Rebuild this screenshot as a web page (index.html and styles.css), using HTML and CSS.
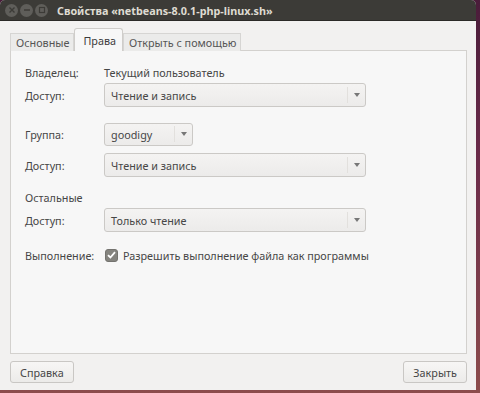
FILE: index.html
```html
<!DOCTYPE html>
<html>
<head>
    <meta charset="UTF-8" />
    <title>Свойства</title>
    <link rel="stylesheet" href="styles.css">
</head>
<body>
    <div class="win">
        <div class="titlebar">
            <span class="tb-btn"><svg width="8" height="8" viewBox="0 0 8 8"><path d="M1.5 1.5l5 5M6.5 1.5l-5 5" stroke="#3c3b37" stroke-width="1.4"/></svg></span>
            <span class="tb-btn"><svg width="8" height="8" viewBox="0 0 8 8"><path d="M1 4h6" stroke="#3c3b37" stroke-width="1.6"/></svg></span>
            <span class="tb-btn"><svg width="8" height="8" viewBox="0 0 8 8"><rect x="1.5" y="1.5" width="5" height="5" fill="none" stroke="#3c3b37" stroke-width="1.2"/></svg></span>
            <span class="title">Свойства «netbeans-8.0.1-php-linux.sh»</span>
        </div>
        <div class="body">
            <div class="tabs">
                <span class="tab">Основные</span>
                <span class="tab active">Права</span>
                <span class="tab">Открыть с помощью</span>
            </div>
            <div class="panel">
                <div class="row r-owner">
                    <span class="lbl">Владелец:</span>
                    <span class="val">Текущий пользователь</span>
                </div>
                <div class="row">
                    <span class="lbl">Доступ:</span>
                    <div class="combo"><span class="ctext">Чтение и запись</span><span class="carrow"></span></div>
                </div>
                <div class="row r-group">
                    <span class="lbl">Группа:</span>
                    <div class="combo small"><span class="ctext">goodigy</span><span class="carrow"></span></div>
                </div>
                <div class="row r-gaccess">
                    <span class="lbl">Доступ:</span>
                    <div class="combo"><span class="ctext">Чтение и запись</span><span class="carrow"></span></div>
                </div>
                <div class="row r-other">
                    <span class="lbl">Остальные</span>
                </div>
                <div class="row">
                    <span class="lbl">Доступ:</span>
                    <div class="combo"><span class="ctext">Только чтение</span><span class="carrow"></span></div>
                </div>
                <div class="row r-exec">
                    <span class="lbl">Выполнение:</span>
                    <span class="check"><svg width="9" height="8" viewBox="0 0 9 8"><path d="M1 4.2l2.4 2.3L8 1.2" fill="none" stroke="#fff" stroke-width="1.8"/></svg></span>
                    <span class="val">Разрешить выполнение файла как программы</span>
                </div>
            </div>
            <div class="actions">
                <span class="btn">Справка</span>
                <span class="btn">Закрыть</span>
            </div>
        </div>
    </div>
</body>
</html>
```

FILE: styles.css
```css
*{
    margin: 0;
    padding: 0;
    box-sizing: border-box;
}
body{
    width: 480px;
    height: 393px;
    overflow: hidden;
    background: linear-gradient(#4a1c3a, #6a2a48 40%, #8c4c4c);
    font-family: "Noto Sans", "DejaVu Sans", sans-serif;
    font-size: 10.8px;
    color: #464646;
}
.win{
    width: 476px;
    height: 390px;
    background: #f2f1f0;
    border-radius: 5px 5px 0 0;
    overflow: hidden;
    display: flex;
    flex-direction: column;
}
.titlebar{
    height: 21px;
    background: #3c3b37;
    border-bottom: 1px solid #2b2a27;
    display: flex;
    align-items: center;
    padding-left: 5px;
    gap: 2px;
}
.tb-btn{
    width: 13px;
    height: 13px;
    border-radius: 50%;
    background: #5f5e5a;
    display: flex;
    align-items: center;
    justify-content: center;
}
.title{
    margin-left: 7px;
    color: #dfdbd2;
    font-weight: bold;
    font-size: 10.8px;
}
.body{
    flex: 1;
    display: flex;
    flex-direction: column;
    padding: 8px 9px 7px 10px;
}
.tabs{
    display: flex;
    align-items: flex-end;
    height: 22px;
    margin-bottom: -1px;
    position: relative;
    z-index: 1;
}
.tab{
    height: 18px;
    padding: 0 4px 0 5px;
    background: #ebebea;
    border: 1px solid #d6d5d3;
    border-bottom: none;
    color: #555;
    display: flex;
    align-items: center;
}
.tab.active{
    height: 23px;
    padding: 0 6px 0 8px;
    background: #f7f7f7;
    border: 1px solid #cfcdca;
    border-bottom: none;
    border-radius: 3px 3px 0 0;
    color: #3c3c3c;
}
.panel{
    flex: 1;
    background: #f7f7f7;
    border: 1px solid #d3d1ce;
    padding: 10px 0 0 14px;
    display: flex;
    flex-direction: column;
}
.row{
    display: flex;
    align-items: center;
    height: 24px;
}
.r-owner{ height: 22px; }
.r-group{ margin-top: 15px; }
.r-gaccess{ margin-top: 7px; }
.r-other{ margin-top: 9px; height: 22px; }
.r-exec{ margin-top: 12px; height: 22px; }
.lbl{
    width: 79px;
    flex-shrink: 0;
}
.combo{
    width: 262px;
    height: 24px;
    border: 1px solid #cbc9c6;
    border-radius: 3px;
    background: linear-gradient(#f4f3f2, #ecebea);
    display: flex;
    align-items: center;
}
.combo.small{
    width: 89px;
    height: 23px;
}
.ctext{
    flex: 1;
    padding-left: 6px;
}
.carrow{
    width: 18px;
    height: 16px;
    border-left: 1px solid #e2e0dd;
    position: relative;
}
.carrow::after{
    content: "";
    position: absolute;
    left: 6px;
    top: 6px;
    border-left: 3px solid transparent;
    border-right: 3px solid transparent;
    border-top: 4px solid #777;
}
.check{
    width: 13px;
    height: 13px;
    border-radius: 3px;
    background: #85847f;
    border: 1px solid #74736f;
    display: flex;
    align-items: center;
    justify-content: center;
    margin: 0 5px 0 1px;
}
.actions{
    display: flex;
    justify-content: space-between;
    padding-top: 7px;
}
.btn{
    height: 22px;
    padding: 0 9px;
    border: 1px solid #c9c7c4;
    border-radius: 3px;
    background: linear-gradient(#f7f6f5, #ecebe9);
    display: flex;
    align-items: center;
}
```
